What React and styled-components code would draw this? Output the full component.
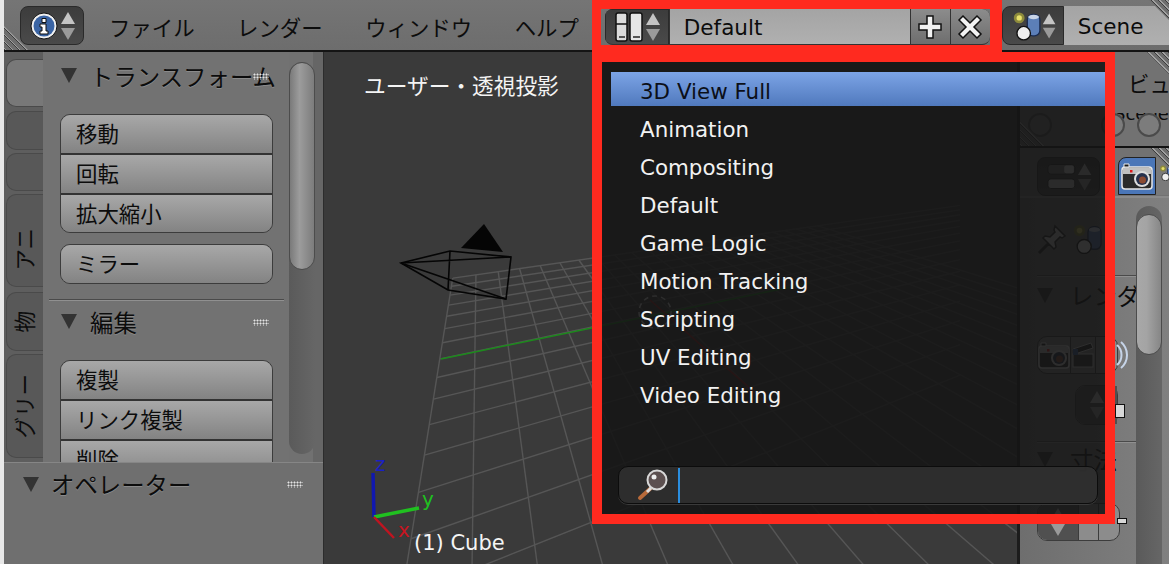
import React from 'react';
import styled, { createGlobalStyle } from 'styled-components';

const FONT = `"DejaVu Sans", "Noto Sans CJK JP", sans-serif`;
const RED = '#ff2a1f';

const GlobalStyle = createGlobalStyle`
  html, body { margin: 0; padding: 0; overflow: hidden; background: #e8e8e8; }
  * { box-sizing: border-box; }
`;

// perspective floor: two vanishing points read off the screenshot
const VP1 = [478, 120];
const VP2 = [1624, 110];

const longLines = [];
for (let k = -1; k <= 22; k++) {
  const dx = (476 + 22 * k - VP1[0]) / 150;
  // meet the top edge of the floor, then run off the bottom
  const y0 = (278 + 0.143 * 453 - 0.143 * VP1[0] + 0.143 * dx * VP1[1]) / (1 + 0.143 * dx);
  const x0 = VP1[0] + dx * (y0 - VP1[1]);
  longLines.push([x0, y0, VP1[0] + dx * (620 - VP1[1]), 620]);
}
const crossLines = [];
for (let i = 0; i <= 14; i++) {
  const y = 115 + 1 / (0.00613 - 0.00029 * i);
  const x = 453 + (y - 278) * (-46 / 286);
  const slope = (VP2[1] - y) / (VP2[0] - x);
  crossLines.push([x, y, 960, y + slope * (960 - x)]);
}

const Page = styled.div`
  position: relative;
  width: 1169px;
  height: 564px;
  padding-left: 4px;
  background: #e8e8e8;
  display: flex;
  flex-direction: column;
  overflow: hidden;
  font-family: ${FONT};
  color: #0c0c0c;
`;

const Header = styled.header`
  position: relative;
  flex: 0 0 52px;
  display: flex;
  align-items: flex-start;
  padding: 6px 0 0 16px;
  background: linear-gradient(#757575, #6d6d6d);
  border-bottom: 2px solid #141414;
  overflow: hidden;
`;

const Hatch = styled.div`
  position: absolute;
  width: ${p => p.$size}px;
  height: ${p => p.$size}px;
  ${p => (p.$corner === 'tr' ? 'right: 0; top: 0;' : 'left: 0; bottom: 0;')}
  clip-path: ${p => (p.$corner === 'tr' ? 'polygon(0 0, 100% 0, 100% 100%)' : 'polygon(0 0, 100% 100%, 0 100%)')};
  background: repeating-linear-gradient(45deg, #3c3c3c 0 1px, #a0a0a0 1px 2px, #6e6e6e 2px 5px);
`;

const IconPicker = styled.div`
  flex: none;
  width: ${p => p.$width}px;
  height: ${p => p.$height || 39}px;
  display: flex;
  align-items: center;
  justify-content: space-between;
  padding: 0 6px 0 9px;
  background: linear-gradient(#3c3c3c, #4a4a4a);
  border: 1px solid #2a2a2a;
  border-radius: ${p => p.$radius || '8px'};
`;

const Menu = styled.nav`
  display: flex;
  gap: 42.5px;
  margin-left: 25px;
  height: 41px;
  align-items: center;
  font-size: 21.4px;
  white-space: nowrap;
  font-family: "Noto Sans CJK JP", sans-serif;
`;

const LayoutBar = styled.div`
  flex: none;
  display: flex;
  width: 385px;
  height: 36px;
  margin: 3px 0 0 26px;
  border-radius: 8px;
  overflow: hidden;
  background: #333;
  gap: 1px;
  border-bottom: 1px solid #333;
`;

const Field = styled.div`
  flex: ${p => (p.$fixed ? `0 0 ${p.$fixed}px` : 1)};
  display: flex;
  align-items: center;
  padding: 2px 0 0 14px;
  font-size: 21.5px;
  background: linear-gradient(#a4a4a4, #b0b0b0);
`;

const SquareButton = styled.div`
  flex: 0 0 39px;
  display: flex;
  align-items: center;
  justify-content: center;
  background: linear-gradient(#8c8c8c, #6e6e6e);
`;

const SceneBar = styled.div`
  flex: none;
  display: flex;
  margin-left: 12px;
  width: 170px;
  height: 39px;
`;

const Body = styled.div`
  flex: 1;
  min-height: 0;
  display: flex;
`;

const ToolShelf = styled.aside`
  flex: 0 0 319px;
  display: flex;
  flex-direction: column;
  background: #6f6f6f;
`;

const ToolsRegion = styled.div`
  flex: 0 0 410px;
  display: flex;
  overflow: hidden;
  padding-right: 8px;
  background: linear-gradient(90deg, #717171 97%, #666 97%);
`;

const Tabs = styled.div`
  flex: 0 0 39px;
  display: flex;
  flex-direction: column;
  padding: 7px 0 0 2px;
  gap: 3px;
  background: #5e5e5e;
`;

const Tab = styled.div`
  height: ${p => p.$height}px;
  margin-top: ${p => p.$gap || 0}px;
  margin-right: ${p => (p.$active ? -2 : 0)}px;
  padding: ${p => p.$shift || 0}px 3px 0 0;
  border: 1px solid #4a4a4a;
  border-right: none;
  border-radius: 10px 0 0 10px;
  background: ${p => (p.$active ? '#787878' : '#585858')};
  display: flex;
  align-items: center;
  justify-content: center;
  font-size: 21.5px;
  font-family: "Noto Sans CJK JP", sans-serif;
`;

const TabLabel = styled.span`
  writing-mode: vertical-rl;
  text-orientation: sideways;
  transform: rotate(180deg);
  white-space: nowrap;
`;

const PanelColumn = styled.div`
  flex: 1;
  min-width: 0;
  padding: 7px 1px 0 6px;
  background: #727272;
`;

const PanelHead = styled.div`
  position: relative;
  display: flex;
  align-items: center;
  height: ${p => p.$height}px;
  padding-left: ${p => p.$indent}px;
  font-size: 23.4px;
  white-space: nowrap;
  text-shadow: 0 1px 0 #8a8a8a;
  font-family: "Noto Sans CJK JP", sans-serif;
`;

const Arrow = styled.span`
  width: 0;
  height: 0;
  margin-right: ${p => p.$gap || 13}px;
  border-left: 8px solid transparent;
  border-right: 8px solid transparent;
  border-top: 15px solid #333;
  flex: none;
`;

const Grip = styled.span`
  position: absolute;
  right: ${p => p.$right}px;
  top: 50%;
  margin-top: -3px;
  width: 16px;
  height: 7px;
  background-image: radial-gradient(#e4e4e4 0.9px, transparent 1.1px);
  background-size: 3px 3px;
`;

const ButtonGroup = styled.div`
  margin: ${p => p.$top}px 0 0 11px;
  width: 213px;
  border: 1.5px solid #3c3c3c;
  border-radius: 10px;
  overflow: hidden;
`;

const ToolButton = styled.div`
  height: ${p => p.$height || 38}px;
  padding: 0 0 3px 15px;
  display: flex;
  align-items: center;
  font-size: 21.4px;
  font-family: "Noto Sans CJK JP", sans-serif;
  background: linear-gradient(#a8a8a8, #838383);
  & + & { border-top: 2px solid #333; }
`;

const Divider = styled.div`
  height: 2px;
  margin: ${p => p.$top}px ${p => p.$side || 4}px 0 0;
  background: linear-gradient(#4a4a4a 50%, #909090 50%);
`;

const ScrollTrack = styled.div`
  flex: 0 0 ${p => p.$width || 26}px;
  height: ${p => p.$height}px;
  margin-top: ${p => p.$top}px;
  border-radius: 13px;
  background: linear-gradient(90deg, #5a5a5a, #666);
`;

const ScrollThumb = styled.div`
  height: ${p => p.$height}px;
  margin-top: ${p => p.$offset || 0}px;
  border-radius: 13px;
  border: 1.5px solid #4c4c4c;
  background: ${p => (p.$light
    ? 'linear-gradient(90deg, #a8a8a8, #a4a4a4 40%, #868686)'
    : 'linear-gradient(90deg, #7a7a7a, #9c9c9c 40%, #7c7c7c)')};
`;

const OperatorPanel = styled.div`
  flex: 1;
  border-top: 1px solid #868686;
  background: #6f6f6f;
`;

const Viewport = styled.main`
  position: relative;
  flex: 0 0 694px;
  display: flex;
  flex-direction: column;
  justify-content: space-between;
  padding: 17px 0 9px 40px;
  background: #3a3a3a;
  border-left: 1px solid #2c2c2c;
  color: #f4f4f4;
  overflow: hidden;
`;

const Scene3D = styled.svg`
  position: absolute;
  left: -324px;
  top: -52px;
  pointer-events: none;
`;

const ViewTitle = styled.div`
  position: relative;
  font-size: 21.7px;
  font-family: "Noto Sans CJK JP", sans-serif;
`;

const ObjectLabel = styled.div`
  position: relative;
  margin-left: 50px;
  font-size: 21px;
`;

const Properties = styled.aside`
  flex: 1;
  min-width: 0;
  display: flex;
  flex-direction: column;
  background: #727272;
  border-left: 3px solid #1c1c1c;
  overflow: hidden;
`;

const ViewRegion = styled.div`
  position: relative;
  flex: 0 0 96px;
  padding: 15px 0 0 108px;
  font-size: 21.4px;
  white-space: nowrap;
  border-bottom: 2px solid #121212;
  font-family: "Noto Sans CJK JP", sans-serif;
`;

const CutText = styled.div`
  display: flex;
  align-items: flex-end;
  margin: 15px 0 0 -14px;
  height: 10px;
  overflow: hidden;
  font-size: 18px;
  line-height: 1;
  font-family: ${FONT};
`;

const KnobRow = styled.div`
  display: flex;
  margin: -10px 0 0 -100px;
`;

const Knob = styled.div`
  flex: none;
  width: 24px;
  height: 24px;
  margin-right: ${p => p.$gap || 0}px;
  border-radius: 50%;
  border: 2px solid #4a4a4a;
  background: #7c7c7c;
`;

const ContextRow = styled.div`
  position: relative;
  flex: 0 0 47px;
  display: flex;
  align-items: flex-start;
  padding: 9px 0 0 17px;
  border-bottom: 2px solid #8a8a8a;
`;

const CamTab = styled.div`
  flex: none;
  width: 38px;
  height: 38px;
  margin-left: 18px;
  display: flex;
  align-items: center;
  justify-content: center;
  border: 1.5px solid #222;
  border-radius: 8px 0 0 0;
  background: #4a76b8;
`;

const NextTab = styled.div`
  flex: none;
  width: 20px;
  height: 38px;
  padding: 8px 0 0 3px;
  background: #7a7a7a;
`;

const PropsBody = styled.div`
  flex: 1;
  display: flex;
  min-height: 0;
  padding-right: 7px;
  background: linear-gradient(90deg, #6e6e6e, #808080);
`;

const PropsContent = styled.div`
  flex: 1;
  min-width: 0;
  overflow: hidden;
  padding: 26px 0 0 17px;
`;

const PinRow = styled.div`
  display: flex;
  align-items: center;
  gap: 5px;
  height: 30px;
`;

const RenderHead = styled.div`
  display: flex;
  align-items: center;
  height: 30px;
  margin-top: ${p => p.$top}px;
  font-size: 23.4px;
  white-space: nowrap;
  font-family: "Noto Sans CJK JP", sans-serif;
`;

const Segments = styled.div`
  display: flex;
  margin: ${p => p.$top}px 0 0 ${p => p.$left || 0}px;
  width: ${p => p.$width}px;
  height: ${p => p.$height || 38}px;
  border: 1.5px solid #3c3c3c;
  border-radius: 10px;
  background: #8c8c8c;
`;

const Segment = styled.div`
  flex: ${p => p.$grow || 1};
  position: relative;
  display: flex;
  align-items: center;
  justify-content: center;
  border-radius: ${p => (p.$dark ? '9px 0 0 9px' : '0')};
  background: ${p => (p.$dark ? '#505050' : 'transparent')};
  & + & { border-left: 1.5px solid #3c3c3c; }
`;

const Tick = styled.span`
  position: absolute;
  right: -8px;
  top: ${p => p.$top}px;
  width: 10px;
  height: ${p => p.$height}px;
  background: #d8d8d8;
  border: 1px solid #111;
`;

const WaveSlot = styled.span`
  position: absolute;
  right: -12px;
  top: 3px;
`;

const LayoutFrame = styled.div`
  position: absolute;
  left: 592px;
  top: 0;
  width: 410px;
  height: 52px;
  border-style: solid;
  border-color: ${RED};
  border-width: 9px 12px 7px 9px;
`;

const Popup = styled.div`
  position: absolute;
  left: 592px;
  top: 52px;
  width: 523px;
  height: 472px;
  padding: 10px 0 10px 9px;
  display: flex;
  flex-direction: column;
  border: 10px solid ${RED};
  background: rgba(20, 20, 20, 0.88);
`;

const PopupRow = styled.div`
  height: 38px;
  padding-left: 29px;
  display: flex;
  align-items: center;
  font-size: 21.4px;
  color: ${p => (p.$active ? '#0b0f18' : '#f2f2f2')};
  background: ${p => (p.$active ? 'linear-gradient(#7ca4e6, #5079bd) no-repeat 0 0 / 100% 34px' : 'none')};
`;

const SearchBox = styled.div`
  display: flex;
  align-items: center;
  height: 38px;
  margin: auto 7px 0 7px;
  padding-left: 18px;
  border: 1.5px solid #0c0c0c;
  border-radius: 10px;
  box-shadow: 0 1px 0 #3a3a3a;
  background: rgba(48, 48, 48, 0.9);
`;

const Caret = styled.div`
  width: 2px;
  height: 35px;
  margin-left: 9px;
  background: #2a8ee0;
`;

const UpDown = ({ light = '#c4c4c4', dark = '#9a9a9a' }) => (
  <svg width="18" height="32" viewBox="0 0 18 32">
    <path d="M9 2 L16 14 H2 Z" fill={light} />
    <path d="M9 30 L16 18 H2 Z" fill={dark} />
  </svg>
);

const InfoIcon = () => (
  <svg width="28" height="28" viewBox="0 0 28 28">
    <circle cx="14" cy="14" r="13" fill="#f0f0f0" stroke="#111" />
    <circle cx="14" cy="14" r="10.5" fill="#3a64a4" />
    <path d="M12 6.5h4v4h-4z M10 12h6v7h2v3h-8v-3h2v-4h-2z" fill="#fff" stroke="#111" strokeWidth="1" />
  </svg>
);

const LayoutIcon = () => (
  <svg width="28" height="30" viewBox="0 0 28 30">
    <rect x="1" y="1" width="11" height="28" rx="2" fill="#dcdcdc" stroke="#111" strokeWidth="1.5" />
    <rect x="15" y="1" width="12" height="28" rx="2" fill="#e6e6e6" stroke="#111" strokeWidth="1.5" />
    <path d="M1 12h11" stroke="#111" strokeWidth="1.5" />
    <path d="M4 25h6M18 25h7" stroke="#555" strokeWidth="2" />
  </svg>
);

const PlusIcon = () => (
  <svg width="26" height="26" viewBox="0 0 26 26">
    <path d="M10 2h6v8h8v6h-8v8h-6v-8H2v-6h8z" fill="#f2f2f2" stroke="#111" strokeWidth="1.5" />
  </svg>
);

const CloseIcon = () => (
  <svg width="26" height="26" viewBox="0 0 26 26">
    <path d="M6 2l7 7 7-7 4 4-7 7 7 7-4 4-7-7-7 7-4-4 7-7-7-7z" fill="#f2f2f2" stroke="#111" strokeWidth="1.5" />
  </svg>
);

const SceneIcon = ({ size = 32 }) => (
  <svg width={size} height={size} viewBox="0 0 32 32">
    <circle cx="8" cy="7" r="6" fill="#8c8a3c" />
    <circle cx="8" cy="7" r="3" fill="#e8e06a" />
    <rect x="17" y="3" width="14" height="24" rx="6" fill="#5c7fb8" stroke="#1c2c50" strokeWidth="1.5" />
    <ellipse cx="24" cy="6" rx="6" ry="2.5" fill="#c8d4e8" />
    <circle cx="13" cy="24" r="7.5" fill="#eee" stroke="#111" strokeWidth="1.5" />
  </svg>
);

const CameraIcon = () => (
  <svg width="32" height="30" viewBox="0 0 32 30">
    <rect x="1" y="6" width="30" height="22" rx="3" fill="#2a2a2a" stroke="#e8e8e8" strokeWidth="1.5" />
    <path d="M3 3h5v3H3z" fill="#1a1a1a" stroke="#eee" />
    <rect x="2" y="7" width="28" height="6" fill="#c0c0c0" />
    <rect x="9" y="9" width="2.5" height="2.5" fill="#e01818" />
    <circle cx="21" cy="18" r="8" fill="#ddd" />
    <circle cx="21" cy="18" r="6" fill="#26324e" />
    <circle cx="21.5" cy="19" r="3.5" fill="#8a4a32" />
  </svg>
);

const ClapperIcon = () => (
  <svg width="24" height="28" viewBox="0 0 24 28">
    <path d="M2 8 L20 2 L22 7 L4 13 Z" fill="#222" stroke="#ddd" />
    <rect x="2" y="13" width="20" height="13" fill="#333" stroke="#ddd" />
    <rect x="2" y="8" width="5" height="6" fill="#3a64a4" />
  </svg>
);

const Magnifier = () => (
  <svg width="32" height="32" viewBox="0 0 32 32">
    <path d="M14 19 L3 29" stroke="#b86a3a" strokeWidth="4" strokeLinecap="round" />
    <path d="M14 19 L10 23" stroke="#ddd" strokeWidth="3" />
    <circle cx="20" cy="11" r="9.5" fill="#5c5050" stroke="#d8d8d8" strokeWidth="2" />
    <circle cx="17" cy="8" r="2.5" fill="#eee" />
  </svg>
);

const PinIcon = () => (
  <svg width="30" height="30" viewBox="0 0 30 30">
    <path d="M18 2l10 10-3 2-2-1-5 5 1 5-2 2-5-5-9 9-1-1 9-9-5-5 2-2 5 1 5-5-1-2z" fill="#cfcfcf" stroke="#222" strokeWidth="1.5" />
  </svg>
);

const ToggleIcon = () => (
  <svg width="30" height="28" viewBox="0 0 30 28">
    <rect x="1" y="1" width="28" height="10" rx="3" fill="#777" stroke="#222" />
    <rect x="18" y="2" width="10" height="8" rx="2" fill="#ddd" />
    <rect x="1" y="16" width="28" height="10" rx="3" fill="#ccc" stroke="#222" />
  </svg>
);

const Wave = () => (
  <svg width="14" height="30" viewBox="0 0 14 30">
    <path d="M2 5 C8 10 8 20 2 25 M6 2 C14 9 14 21 6 28" fill="none" stroke="#c6d4e8" strokeWidth="2" />
  </svg>
);

const MENU = ['ファイル', 'レンダー', 'ウィンドウ', 'ヘルプ'];
const LAYOUTS = ['3D View Full', 'Animation', 'Compositing', 'Default', 'Game Logic', 'Motion Tracking', 'Scripting', 'UV Editing', 'Video Editing'];

const SceneDrawing = () => (
  <Scene3D width="1169" height="564" viewBox="0 0 1169 564">
    <g stroke="#565656" strokeWidth="1.4">
      {longLines.map((l, i) => <line key={i} x1={l[0]} y1={l[1]} x2={l[2]} y2={l[3]} />)}
      {crossLines.map((l, i) => <line key={i} x1={l[0]} y1={l[1]} x2={l[2]} y2={l[3]} />)}
    </g>
    <path d="M441 359 L810 283" stroke="#1c8a1c" strokeWidth="1.6" />
    <path d="M650 300 L772 408" stroke="#a01c1c" strokeWidth="1.6" />
    <circle cx="655" cy="312" r="16" fill="none" stroke="#ddd" strokeWidth="1.5" strokeDasharray="5 4" />
    <g fill="none" stroke="#050505" strokeWidth="1.6">
      <path d="M401 263 L450 251 L511 257 L506 299 L448 290 Z" />
      <path d="M450 251 L448 290 M401 263 L511 257 M401 263 L506 299" />
    </g>
    <path d="M461 248 L484 224 L503 252 Z" fill="#050505" />
    <path d="M374 517 L373 473" stroke="#1018b0" strokeWidth="3.5" />
    <path d="M374 517 L419 508" stroke="#20c020" strokeWidth="3.5" />
    <path d="M374 517 L394 538" stroke="#c01420" strokeWidth="2.5" />
    <g fontFamily="DejaVu Sans, sans-serif" fontSize="20">
      <text x="375" y="471" fill="#1a20c4">z</text>
      <text x="422" y="506" fill="#20c020">y</text>
      <text x="398" y="537" fill="#c81420">x</text>
    </g>
  </Scene3D>
);

export default function App() {
  return (
    <Page>
      <GlobalStyle />
      <Header>
        <Hatch $corner="bl" $size={24} />
        <Hatch $corner="tr" $size={20} />
        <IconPicker $width={64}>
          <InfoIcon />
          <UpDown />
        </IconPicker>
        <Menu>
          {MENU.map(m => <span key={m}>{m}</span>)}
        </Menu>
        <LayoutBar>
          <IconPicker $width={64} $height={36} $radius="0">
            <LayoutIcon />
            <UpDown />
          </IconPicker>
          <Field>Default</Field>
          <SquareButton><PlusIcon /></SquareButton>
          <SquareButton><CloseIcon /></SquareButton>
        </LayoutBar>
        <SceneBar>
          <IconPicker $width={62} $radius="8px 0 0 8px">
            <SceneIcon />
            <UpDown />
          </IconPicker>
          <Field>Scene</Field>
        </SceneBar>
      </Header>
      <Body>
        <ToolShelf>
          <ToolsRegion>
            <Tabs>
              <Tab $active $height={48} />
              <Tab $height={39} $gap={1} />
              <Tab $height={38} />
              <Tab $height={93} $shift={18}><TabLabel>アニ</TabLabel></Tab>
              <Tab $height={59} $gap={2}><TabLabel>物</TabLabel></Tab>
              <Tab $height={104}><TabLabel>グリー</TabLabel></Tab>
            </Tabs>
            <PanelColumn>
              <PanelHead $height={33} $indent={12}>
                <Arrow />トランスフォーム
                <Grip $right={19} />
              </PanelHead>
              <ButtonGroup $top={22}>
                <ToolButton>移動</ToolButton>
                <ToolButton $height={40}>回転</ToolButton>
                <ToolButton $height={39}>拡大縮小</ToolButton>
              </ButtonGroup>
              <ButtonGroup $top={11}>
                <ToolButton>ミラー</ToolButton>
              </ButtonGroup>
              <Divider $top={15} />
              <PanelHead $height={41} $indent={12}>
                <Arrow />編集
                <Grip $right={19} />
              </PanelHead>
              <ButtonGroup $top={18}>
                <ToolButton>複製</ToolButton>
                <ToolButton $height={40}>リンク複製</ToolButton>
                <ToolButton $height={40}>削除</ToolButton>
              </ButtonGroup>
            </PanelColumn>
            <ScrollTrack $height={392} $top={10}>
              <ScrollThumb $height={208} />
            </ScrollTrack>
          </ToolsRegion>
          <OperatorPanel>
            <PanelHead $height={42} $indent={19}>
              <Arrow $gap={12} />オペレーター
              <Grip $right={20} />
            </PanelHead>
          </OperatorPanel>
        </ToolShelf>
        <Viewport>
          <SceneDrawing />
          <ViewTitle>ユーザー・透視投影</ViewTitle>
          <ObjectLabel>(1) Cube</ObjectLabel>
        </Viewport>
        <Properties>
          <ViewRegion>
            <Hatch $corner="bl" $size={26} />
            <Hatch $corner="tr" $size={22} />
            ビュ
            <CutText>Scene</CutText>
            <KnobRow>
              <Knob $gap={49} />
              <Knob $gap={12} />
              <Knob />
            </KnobRow>
          </ViewRegion>
          <ContextRow>
            <Hatch $corner="tr" $size={20} />
            <IconPicker $width={63}>
              <ToggleIcon />
              <UpDown />
            </IconPicker>
            <CamTab><CameraIcon /></CamTab>
            <NextTab><SceneIcon size={16} /></NextTab>
          </ContextRow>
          <PropsBody>
            <PropsContent>
              <PinRow>
                <PinIcon />
                <SceneIcon size={30} />
              </PinRow>
              <Divider $top={21} $side={-8} />
              <RenderHead $top={3}>
                <Arrow $gap={17} />レンダー
              </RenderHead>
              <Segments $top={26} $width={81}>
                <Segment><CameraIcon /></Segment>
                <Segment><ClapperIcon /></Segment>
                <Segment $grow={0.9}><WaveSlot><Wave /></WaveSlot></Segment>
              </Segments>
              <Segments $top={11} $left={38} $width={43} $height={40}>
                <Segment $dark><UpDown /><Tick $top={18} $height={14} /></Segment>
              </Segments>
              <Divider $top={16} $side={-8} />
              <RenderHead $top={1}>
                <Arrow $gap={17} />寸法
              </RenderHead>
              <Segments $top={29} $width={83}>
                <Segment $dark $grow={2}><UpDown /></Segment>
                <Segment />
                <Segment><Tick $top={14} $height={6} /></Segment>
              </Segments>
            </PropsContent>
            <ScrollTrack $height={380} $top={8} $width={26}>
              <ScrollThumb $light $height={141} $offset={8} />
            </ScrollTrack>
          </PropsBody>
        </Properties>
      </Body>
      <LayoutFrame />
      <Popup>
        {LAYOUTS.map((name, i) => (
          <PopupRow key={name} $active={i === 0}>{name}</PopupRow>
        ))}
        <SearchBox>
          <Magnifier />
          <Caret />
        </SearchBox>
      </Popup>
    </Page>
  );
}
